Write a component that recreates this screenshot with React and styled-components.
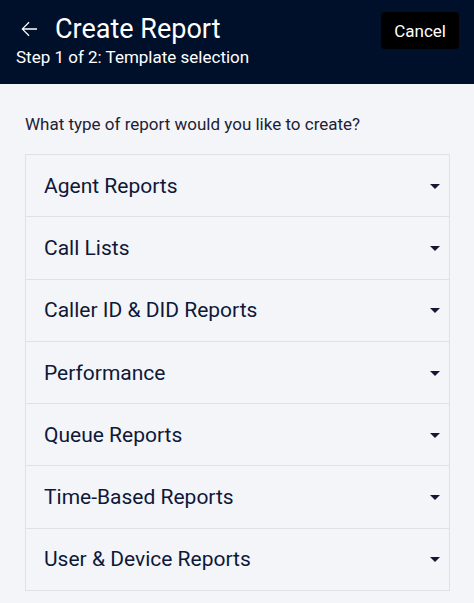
import React from 'react';
import styled, { createGlobalStyle } from 'styled-components';

const GlobalStyle = createGlobalStyle`
  body {
    margin: 0;
    background: #f4f5f8;
    font-family: Roboto, "Liberation Sans", sans-serif;
  }
`;

const Header = styled.header`
  background: #00102a;
  height: 84px;
  box-sizing: border-box;
  padding: 12px 15px 0 16px;
  display: flex;
  justify-content: space-between;
  align-items: flex-start;
`;

const TitleBlock = styled.div`
  display: flex;
  flex-direction: column;
`;

const TitleRow = styled.div`
  display: flex;
  align-items: center;
  gap: 14px;
  color: #fff;
  padding-left: 1px;
`;

const Title = styled.h1`
  margin: 0;
  font-size: 27px;
  font-weight: 400;
  line-height: 34px;
`;

const Subtitle = styled.div`
  color: #fff;
  font-size: 17px;
  line-height: 22px;
`;

const CancelButton = styled.button`
  background: #000;
  color: #fff;
  border: none;
  border-radius: 4px;
  font-family: inherit;
  font-size: 17px;
  height: 37px;
  padding: 0 13px;
  cursor: pointer;
`;

const Main = styled.main`
  padding: 29px 24px 12px 25px;
`;

const Question = styled.p`
  margin: 0 0 19px;
  font-size: 17px;
  line-height: 22px;
  color: #1d2236;
`;

const List = styled.div`
  border: 1px solid #dfe1e6;
`;

const Row = styled.div`
  height: 61.3px;
  display: flex;
  align-items: center;
  justify-content: space-between;
  padding: 0 2px 0 18px;
  border-top: ${(p) => (p.$first ? 'none' : '1px solid #dfe1e6')};
  color: #0e1838;
  font-size: 21px;
  cursor: pointer;
`;

const Caret = () => (
  <svg width="24" height="24" viewBox="0 0 24 24">
    <path d="M7 10l5 5 5-5z" fill="#1a1433" />
  </svg>
);

const BackArrow = () => (
  <svg width="24" height="24" viewBox="0 0 24 24">
    <path
      d="M20 11.25H6.9l5.6-5.6-.9-.9L4.5 12l7.1 7.25.9-.9-5.6-5.6H20v-1.5z"
      fill="#fff"
    />
  </svg>
);

const items = [
  'Agent Reports',
  'Call Lists',
  'Caller ID & DID Reports',
  'Performance',
  'Queue Reports',
  'Time-Based Reports',
  'User & Device Reports',
];

export default function App() {
  return (
    <>
      <GlobalStyle />
      <Header>
        <TitleBlock>
          <TitleRow>
            <BackArrow />
            <Title>Create Report</Title>
          </TitleRow>
          <Subtitle>Step 1 of 2: Template selection</Subtitle>
        </TitleBlock>
        <CancelButton>Cancel</CancelButton>
      </Header>
      <Main>
        <Question>What type of report would you like to create?</Question>
        <List>
          {items.map((item, i) => (
            <Row key={item} $first={i === 0}>
              <span>{item}</span>
              <Caret />
            </Row>
          ))}
        </List>
      </Main>
    </>
  );
}
